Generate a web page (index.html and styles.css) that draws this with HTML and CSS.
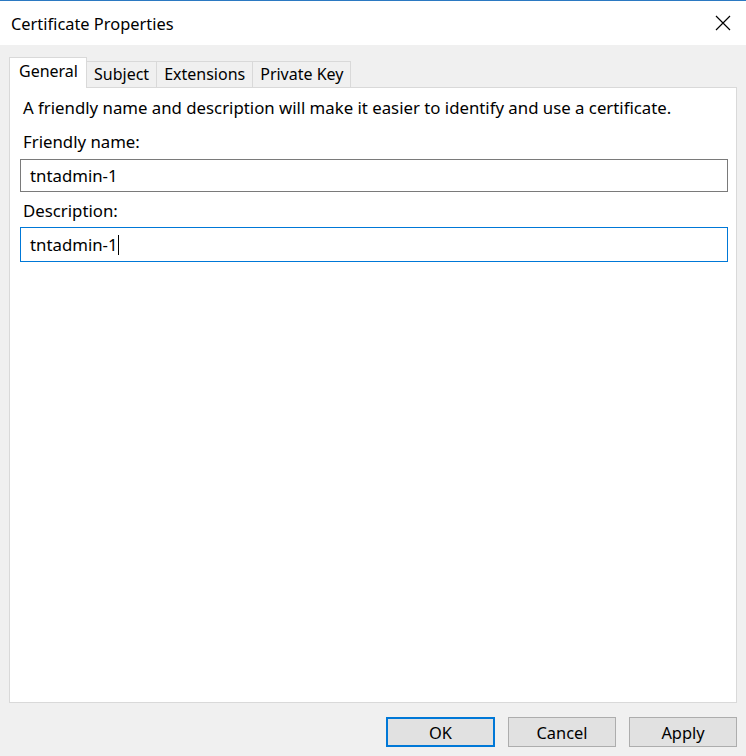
FILE: index.html
```html
<!DOCTYPE html>
<html lang="en">
<head>
    <meta charset="UTF-8">
    <title>Certificate Properties</title>
    <link rel="stylesheet" href="styles.css">
</head>
<body>
    <div class="dialog">
        <div class="titlebar">
            <span class="title">Certificate Properties</span>
            <svg class="close" width="16" height="16" viewBox="0 0 16 16">
                <path d="M1 1 L15 15 M15 1 L1 15" stroke="#000" stroke-width="1.2" fill="none"/>
            </svg>
        </div>
        <div class="content">
            <div class="tabs">
                <div class="tab active">General</div>
                <div class="tab">Subject</div>
                <div class="tab">Extensions</div>
                <div class="tab">Private Key</div>
            </div>
            <div class="panel">
                <p class="intro">A friendly name and description will make it easier to identify and use a certificate.</p>
                <label class="field-label" for="friendly">Friendly name:</label>
                <div class="field" id="friendly">tntadmin-1</div>
                <label class="field-label second" for="desc">Description:</label>
                <div class="field focused" id="desc">tntadmin-1<span class="caret"></span></div>
            </div>
            <div class="buttons">
                <button class="btn default">OK</button>
                <button class="btn">Cancel</button>
                <button class="btn">Apply</button>
            </div>
        </div>
    </div>
</body>
</html>
```

FILE: styles.css
```css
body {
    margin: 0;
    font-family: "Noto Sans", "Open Sans", sans-serif;
    font-size: 16.8px;
    color: #000;
    background-color: #f0f0f0;
}
.dialog {
    width: 746px;
    height: 756px;
    display: flex;
    flex-direction: column;
}
.titlebar {
    height: 45px;
    border-top: 1px solid #2b79c2;
    background-color: #fff;
    display: flex;
    align-items: center;
    justify-content: space-between;
    padding: 0 15px 2px 11px;
    box-sizing: border-box;
    flex: none;
}
.title {
    font-size: 16.4px;
    margin-top: 3px;
}
.close {
    margin-top: 2px;
}
.content {
    flex: 1;
    display: flex;
    flex-direction: column;
    padding: 12px 9px 9px 9px;
}
.tabs {
    display: flex;
    align-items: flex-end;
    height: 30px;
}
.tab {
    height: 26px;
    line-height: 25px;
    padding: 0 7px;
    font-size: 16px;
    border: 1px solid #d9d9d9;
    border-bottom: none;
    border-left: none;
    box-sizing: border-box;
    background-color: #f0f0f0;
    color: #000;
}
.tab.active {
    height: 31px;
    line-height: 27px;
    background-color: #fff;
    border-left: 1px solid #d9d9d9;
    margin-bottom: -1px;
    position: relative;
    z-index: 1;
    padding: 0 0 0 9px;
    width: 78px;
}
.panel {
    flex: 1;
    background-color: #fff;
    border: 1px solid #d9d9d9;
    padding: 8px 8px 0 10px;
}
.intro {
    margin: 0 0 0 3px;
    line-height: 24px;
}
.field-label {
    display: block;
    margin: 10px 0 0 3px;
    line-height: 24px;
}
.field-label.second {
    margin-top: 7px;
}
.field {
    height: 33px;
    border: 1px solid #7a7a7a;
    box-sizing: border-box;
    line-height: 31px;
    padding-left: 9px;
    margin-top: 5px;
}
.field.focused {
    height: 35px;
    line-height: 33px;
    border-color: #0078d7;
    margin-top: 4px;
}
.caret {
    display: inline-block;
    width: 1px;
    height: 20px;
    background-color: #000;
    vertical-align: -4px;
}
.buttons {
    display: flex;
    justify-content: flex-end;
    gap: 13px;
    margin-top: 14px;
}
.btn {
    width: 108px;
    height: 30px;
    font-family: "Noto Sans", "Open Sans", sans-serif;
    font-size: 16.4px;
    background-color: #e1e1e1;
    border: 1px solid #adadad;
    color: #000;
    padding: 0;
}
.btn.default {
    width: 109px;
    border: 2px solid #0078d7;
}
```
